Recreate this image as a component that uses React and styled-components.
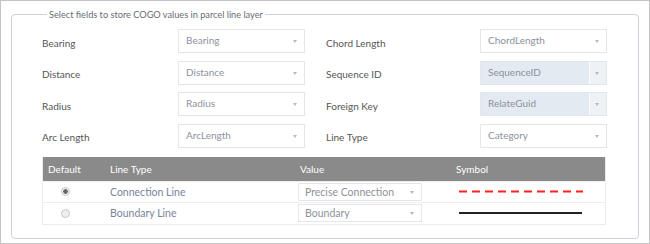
import React from 'react';
import styled, {createGlobalStyle} from 'styled-components';

const GlobalStyle = createGlobalStyle`
  body {
    margin: 0;
    background: #fff;
    font-family: Lato, "Open Sans", sans-serif;
  }
`;

const Frame = styled.div`
  box-sizing: border-box;
  width: 650px;
  height: 244px;
  border: 1px solid #c4c4c4;
  padding: 8px 10px 0 10px;
`;

const Group = styled.fieldset`
  box-sizing: border-box;
  margin: 0;
  height: 230px;
  border: 1px solid #cdd2dc;
  border-radius: 4px;
  padding: 9px 0 0 30px;
`;

const Legend = styled.legend`
  margin-left: 5px;
  padding: 0 2px;
  font-size: 9.2px;
  color: #666c76;
`;

const Fields = styled.div`
  display: grid;
  grid-template-columns: 136px 127px 21px 154px 127px;
  row-gap: 7.5px;
  align-items: center;
`;

const Label = styled.div`
  grid-column: ${props => props.right ? 4 : 1};
  font-size: 10px;
  color: #555;
  padding-top: 3px;
`;

const Select = styled.div`
  position: relative;
  grid-column: ${props => props.right ? 5 : 2};
  box-sizing: border-box;
  width: ${props => props.small ? '124px' : 'auto'};
  height: ${props => props.small ? 18 : 24}px;
  border: 1px solid #e3e6eb;
  background: ${props => props.disabled ? '#e3eaf2' : '#fff'};
  color: #8d929b;
  font-size: ${props => props.small ? 10.5 : 10}px;
  line-height: ${props => props.small ? 16 : 21}px;
  padding-left: ${props => props.small ? 6 : 7}px;
  &::before {
    content: '';
    display: ${props => props.disabled ? 'block' : 'none'};
    position: absolute;
    top: 0;
    right: 0;
    bottom: 0;
    width: 16px;
    background: #eef1f5;
    border-left: 1px solid #fff;
  }
  &::after {
    content: '';
    position: absolute;
    right: 7px;
    top: 50%;
    margin-top: -1px;
    border-left: 2.5px solid transparent;
    border-right: 2.5px solid transparent;
    border-top: 3px solid #b5bac2;
  }
`;

const Table = styled.div`
  margin-top: 9px;
  width: 564px;
  border: 1px solid #ececec;
  border-top: none;
  box-sizing: border-box;
`;

const Row = styled.div`
  display: grid;
  grid-template-columns: 62px 190px 156px 1fr;
  align-items: center;
  height: ${props => props.head ? 24 : 20.5}px;
  background: ${props => props.head ? '#8a8a8a' : '#fff'};
  color: ${props => props.head ? '#fff' : '#7a849a'};
  font-size: ${props => props.head ? 10 : 10.5}px;
  & + & {
    border-top: 1px solid #efefef;
  }
`;

const Cell = styled.div`
  padding-left: ${props => props.pad ?? 5}px;
  display: flex;
  align-items: center;
`;

const Radio = styled.span`
  box-sizing: border-box;
  width: 9px;
  height: 9px;
  margin-left: 18px;
  border-radius: 50%;
  border: 1px solid #c9c9c9;
  background: ${props => props.checked ? 'radial-gradient(circle, #666 0 2px, #eee 2.5px)' : '#eee'};
`;

const Line = styled.div`
  width: 123px;
  margin-left: 3px;
  border-top: 2px solid #222;
`;

const DashedLine = styled.svg`
  display: block;
  margin-left: 3px;
`;

const fields = [
    ['Bearing', 'Bearing', 'Chord Length', 'ChordLength', false],
    ['Distance', 'Distance', 'Sequence ID', 'SequenceID', true],
    ['Radius', 'Radius', 'Foreign Key', 'RelateGuid', true],
    ['Arc Length', 'ArcLength', 'Line Type', 'Category', false],
];

export default function App() {
    return (
        <Frame>
            <GlobalStyle/>
            <Group>
                <Legend>Select fields to store COGO values in parcel line layer</Legend>
                <Fields>
                    {fields.map(f => (
                        <React.Fragment key={f[0]}>
                            <Label>{f[0]}</Label>
                            <Select>{f[1]}</Select>
                            <Label right>{f[2]}</Label>
                            <Select right disabled={f[4]}>{f[3]}</Select>
                        </React.Fragment>
                    ))}
                </Fields>
                <Table>
                    <Row head>
                        <Cell>Default</Cell>
                        <Cell>Line Type</Cell>
                        <Cell>Value</Cell>
                        <Cell>Symbol</Cell>
                    </Row>
                    <Row>
                        <Cell pad={0}><Radio checked/></Cell>
                        <Cell>Connection Line</Cell>
                        <Cell pad={3}><Select small>Precise Connection</Select></Cell>
                        <Cell>
                            <DashedLine width="124" height="3">
                                <line x1="0" y1="1.5" x2="124" y2="1.5" stroke="#ff2020" strokeWidth="2" strokeDasharray="8 5"/>
                            </DashedLine>
                        </Cell>
                    </Row>
                    <Row>
                        <Cell pad={0}><Radio/></Cell>
                        <Cell>Boundary Line</Cell>
                        <Cell pad={3}><Select small>Boundary</Select></Cell>
                        <Cell><Line/></Cell>
                    </Row>
                </Table>
            </Group>
        </Frame>
    );
}
